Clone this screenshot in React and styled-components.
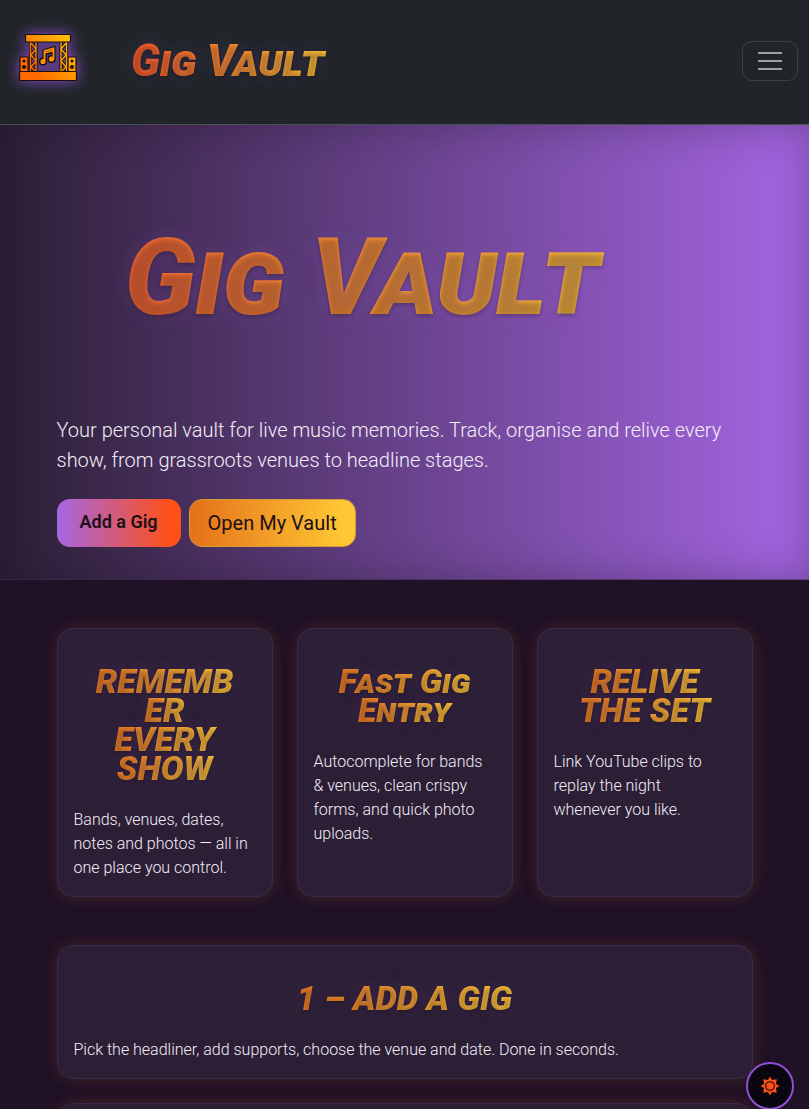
import React from "react";
import styled, { createGlobalStyle } from "styled-components";

const GlobalStyle = createGlobalStyle`
  * { box-sizing: border-box; }
  body {
    margin: 0;
    background: #1f1126;
    color: #f3eef8;
    font-family: Roboto, "Open Sans", sans-serif;
    font-weight: 300;
    font-size: 16px;
    line-height: 24px;
  }
  h1, h2, h3, p { margin: 0; }
`;

const Page = styled.div`
  height: 100vh;
  overflow: hidden;
`;

const Navbar = styled.header`
  display: flex;
  align-items: center;
  height: 125px;
  padding: 0 11px 2px 18px;
  background: #212529;
  border-bottom: 1px solid #495057;
`;

const LogoLink = styled.a`
  display: flex;
  padding-bottom: 6px;
  filter: drop-shadow(0 0 7px rgba(150, 80, 230, 0.9));
`;

const Display = styled.span`
  display: block;
  font-family: Roboto, sans-serif;
  font-weight: 900;
  font-style: italic;
  font-variant-caps: small-caps;
  white-space: nowrap;
  color: transparent;
  background-image: linear-gradient(90deg, #ff5a20, #ffc933);
  -webkit-background-clip: text;
  background-clip: text;
  text-shadow: 0 2px 4px rgba(0, 0, 0, 0.25), 0 0 18px rgba(165, 102, 227, 0.2);
`;

const Brand = styled(Display)`
  margin-left: 53px;
  padding-right: 8px;
  font-size: 44px;
  line-height: 56px;
`;

const Toggler = styled.button`
  display: flex;
  align-items: center;
  justify-content: center;
  width: 56px;
  height: 40px;
  margin-left: auto;
  padding: 0;
  background: transparent;
  border: 1px solid rgba(255, 255, 255, 0.12);
  border-radius: 10px;
`;

const Hero = styled.section`
  padding: 80px 0 32px;
  background: linear-gradient(90deg, #2c1f35, #a566e3);
  border-bottom: 1px solid rgba(58, 42, 75, 0.6);
  box-shadow: inset 0 0 40px rgba(31, 17, 38, 0.35);
`;

const Container = styled.div`
  width: 100%;
  max-width: 720px;
  margin: 0 auto;
  padding: 0 12px;
`;

const HeroTitle = styled(Display).attrs({ as: "h1" })`
  width: fit-content;
  margin-bottom: 66px;
  padding: 0 40px 0 68px;
  font-size: 108px;
  line-height: 144px;
`;

const Lead = styled.p`
  font-size: 20px;
  line-height: 30px;
`;

const Actions = styled.div`
  display: flex;
  gap: 8px;
  margin-top: 24px;
`;

const Button = styled.button`
  height: 48px;
  padding: ${(p) => (p.$primary ? "0 23px 3px" : "0 18px")};
  font-family: inherit;
  font-size: ${(p) => (p.$primary ? 18 : 20)}px;
  font-weight: ${(p) => (p.$primary ? 600 : 400)};
  color: #1a1018;
  border: ${(p) => (p.$primary ? "0" : "1px solid #d99a3c")};
  border-radius: 13px;
  background: ${(p) =>
    p.$primary
      ? "linear-gradient(90deg, #a566e3, #ff5018 92%)"
      : "linear-gradient(90deg, #e5711a, #ffc933 95%)"};
`;

const Features = styled.div`
  display: grid;
  grid-template-columns: repeat(3, 1fr);
  gap: 24px;
  margin: 48px 0;
`;

const Steps = styled.div`
  display: grid;
  gap: 24px;
`;

const Card = styled.article`
  min-height: 60px;
  padding: 16px;
  background: #2c1f35;
  border: 1px solid #3a2a4b;
  border-radius: 16px;
  box-shadow: -2px -1px 18px rgba(255, 80, 24, 0.08), 2px 1px 18px rgba(255, 180, 40, 0.1);
`;

const CardTitle = styled.h2`
  display: flex;
  flex-direction: column;
  align-items: center;
  padding: 22px 0 25px;
`;

const CardLine = styled(Display)`
  padding: 0 4px;
  font-size: 34px;
  line-height: 29px;
  background-image: linear-gradient(90deg, #ee7a1e, #ffc933);
`;

const CardText = styled.p`
  padding-right: 5px;
`;

const ThemeButton = styled.button`
  position: fixed;
  right: 15px;
  bottom: -1px;
  display: flex;
  align-items: center;
  justify-content: center;
  width: 48px;
  height: 48px;
  padding: 0;
  background: #0a0610;
  border: 2px solid #8f4fd6;
  border-radius: 50%;
`;

const StageLogo = () => (
  <svg width="60" height="50" viewBox="0 0 60 50" aria-hidden="true">
    <defs>
      <linearGradient id="stage" x1="0" y1="50" x2="60" y2="0" gradientUnits="userSpaceOnUse">
        <stop offset=".25" stopColor="#ff6a00" />
        <stop offset="1" stopColor="#ffd000" />
      </linearGradient>
    </defs>
    <rect x="18" y="9" width="24" height="30" fill="#573a80" />
    <g fill="url(#stage)" stroke="#15100f" strokeWidth="1.2" strokeLinejoin="round">
      <rect x="2" y="24" width="8" height="15" />
      <rect x="50" y="24" width="8" height="15" />
    </g>
    <g fill="none" stroke="#15100f" strokeWidth="3.200">
      <path d="M12.500 8v31M18 8v31M43 8v31M48.500 8v31M13 10l5 6-5 6 5 6-5 6 4 4M48 10l-5 6 5 6-5 6 5 6-4 4" />
    </g>
    <g fill="none" stroke="url(#stage)" strokeWidth="1.400">
      <path d="M12.500 8v31M18 8v31M43 8v31M48.500 8v31M13 10l5 6-5 6 5 6-5 6 4 4M48 10l-5 6 5 6-5 6 5 6-4 4" />
    </g>
    <g fill="url(#stage)" stroke="#15100f" strokeWidth="1.200">
      <rect x="7.500" y="1.500" width="45" height="7.500" rx="1" />
      <rect x="1.500" y="38.500" width="57" height="9" rx="1" />
    </g>
    <g fill="#15100f">
      <circle cx="6" cy="28" r="1.500" />
      <circle cx="6" cy="34" r="2" />
      <circle cx="54" cy="28" r="1.500" />
      <circle cx="54" cy="34" r="2" />
    </g>
    <g stroke="#15100f" strokeWidth="4" fill="none">
      <path d="M26.500 28V18l9-2.500v10.500M26.500 20.500l9-2.500" />
      <circle cx="25" cy="28.500" r="2" />
      <circle cx="33.500" cy="26" r="2" />
    </g>
    <g stroke="#ff9300" strokeWidth="1.800" fill="#ff8300">
      <path d="M26.500 28V18l9-2.500v10.500M26.500 20l9-2.500" fill="none" />
      <circle cx="25" cy="28.500" r="1.700" />
      <circle cx="33.500" cy="26" r="1.700" />
    </g>
  </svg>
);

const SunIcon = () => (
  <svg width="20" height="20" viewBox="0 0 20 20" fill="#ff4f1a" aria-hidden="true">
    <path d="M10 .5 12 4 16.700 3.300 16 8 19.500 10 16 12 16.700 16.700 12 16 10 19.500 8 16 3.300 16.700 4 12 .5 10 4 8 3.300 3.300 8 4Z" />
    <circle cx="10" cy="10" r="4.300" stroke="#0a0610" strokeWidth="1.100" />
  </svg>
);

const features = [
  {
    lines: ["REMEMB", "ER", "EVERY", "SHOW"],
    text: "Bands, venues, dates, notes and photos — all in one place you control.",
  },
  {
    lines: ["Fast Gig", "Entry"],
    text: "Autocomplete for bands & venues, clean crispy forms, and quick photo uploads.",
  },
  {
    lines: ["RELIVE", "THE SET"],
    text: "Link YouTube clips to replay the night whenever you like.",
  },
];

const InfoCard = ({ lines, text }) => (
  <Card>
    <CardTitle>
      {lines.map((line) => (
        <CardLine key={line}>{line}</CardLine>
      ))}
    </CardTitle>
    <CardText>{text}</CardText>
  </Card>
);

export default function App() {
  return (
    <Page>
      <GlobalStyle />
      <Navbar>
        <LogoLink href="#" aria-label="Home">
          <StageLogo />
        </LogoLink>
        <Brand>Gig Vault</Brand>
        <Toggler type="button" aria-label="Toggle navigation">
          <svg width="30" height="30" viewBox="0 0 30 30" aria-hidden="true">
            <path d="M3 7h24M3 15h24M3 23h24" stroke="#a0a1a3" strokeWidth="2" />
          </svg>
        </Toggler>
      </Navbar>
      <main>
        <Hero>
          <Container>
            <HeroTitle>Gig Vault</HeroTitle>
            <Lead>
              Your personal vault for live music memories. Track, organise and relive every show,
              from grassroots venues to headline stages.
            </Lead>
            <Actions>
              <Button type="button" $primary>Add a Gig</Button>
              <Button type="button">Open My Vault</Button>
            </Actions>
          </Container>
        </Hero>
        <Container>
          <Features>
            {features.map((f) => (
              <InfoCard key={f.text} {...f} />
            ))}
          </Features>
          <Steps>
            <InfoCard
              lines={["1 – ADD A GIG"]}
              text="Pick the headliner, add supports, choose the venue and date. Done in seconds."
            />
            <Card />
          </Steps>
        </Container>
      </main>
      <ThemeButton type="button" aria-label="Switch theme">
        <SunIcon />
      </ThemeButton>
    </Page>
  );
}
